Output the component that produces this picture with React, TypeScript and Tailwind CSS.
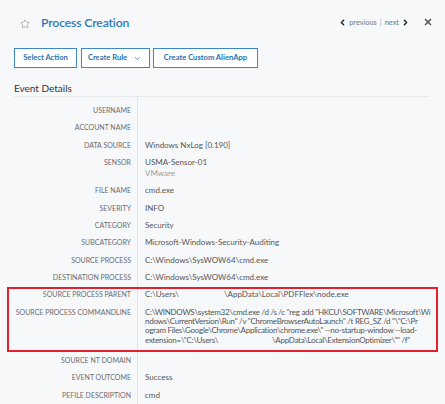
import React from 'react';
import { ChevronDown, ChevronLeft, ChevronRight, Star, X } from 'lucide-react';

type Row = { label: string; value?: React.ReactNode };

const topRows: Row[] = [
  { label: 'USERNAME' },
  { label: 'ACCOUNT NAME' },
  { label: 'DATA SOURCE', value: 'Windows NxLog [0.190]' },
  {
    label: 'SENSOR',
    value: (
      <>
        <div>USMA-Sensor-01</div>
        <div className="text-[#9a9a9a]">VMware</div>
      </>
    ),
  },
  { label: 'FILE NAME', value: 'cmd.exe' },
  { label: 'SEVERITY', value: 'INFO' },
  { label: 'CATEGORY', value: 'Security' },
  { label: 'SUBCATEGORY', value: 'Microsoft-Windows-Security-Auditing' },
  { label: 'SOURCE PROCESS', value: 'C:\\Windows\\SysWOW64\\cmd.exe' },
  { label: 'DESTINATION PROCESS', value: 'C:\\Windows\\SysWOW64\\cmd.exe' },
];

const bottomRows: Row[] = [
  { label: 'SOURCE NT DOMAIN' },
  { label: 'EVENT OUTCOME', value: 'Success' },
  { label: 'PEFILE DESCRIPTION', value: 'cmd' },
];

function DetailRow({ label, value, className = 'py-[3px] leading-[11.3px]' }: Row & { className?: string }) {
  return (
    <div className="flex">
      <div className={`w-[124px] shrink-0 border-r border-[#e3e5e8] pr-[6px] text-right text-[7px] uppercase text-[#6d6d6d] ${className}`}>
        {label}
      </div>
      <div className={`min-w-0 flex-1 pl-[7px] text-[8px] text-[#555] ${className}`}>{value}</div>
    </div>
  );
}

function Btn({ children, w }: { children: React.ReactNode; w: string }) {
  return (
    <button
      className={`${w} flex h-[20px] items-center justify-center gap-[6px] border-[1.5px] border-[#3d85c6] bg-white text-[7.6px] font-bold text-[#2c6fae]`}
    >
      {children}
    </button>
  );
}

export default function App() {
  return (
    <div className="h-[404px] w-[445px] overflow-hidden bg-[#f7f8fa] font-['Lato',sans-serif]">
      {/* header */}
      <div className="flex items-center pl-[20px] pr-[12px] pt-[14px]">
        <Star size={10} strokeWidth={1.4} className="mt-[3px] text-[#8a8a8a]" />
        <h1 className="ml-[11px] text-[12.2px] font-semibold leading-[17px] tracking-[-0.15px] text-[#2c78bd]">
          Process Creation
        </h1>
        <div className="ml-auto flex items-center text-[7.4px] text-[#6b7a88]">
          <ChevronLeft size={9} strokeWidth={4} className="text-[#222]" />
          <span className="ml-[2px]">previous</span>
          <span className="mx-[3px] text-[#aaa]">|</span>
          <span>next</span>
          <ChevronRight size={9} strokeWidth={4} className="ml-[2px] text-[#222]" />
          <X size={10} strokeWidth={4} className="ml-[13px] text-[#555]" />
        </div>
      </div>

      {/* actions */}
      <div className="mt-[17px] flex gap-[3.5px] px-[14px]">
        <Btn w="w-[63px]">Select Action</Btn>
        <Btn w="w-[69px]">
          Create Rule
          <ChevronDown size={9} strokeWidth={2} />
        </Btn>
        <Btn w="w-[105px]">Create Custom AlienApp</Btn>
      </div>

      {/* details */}
      <div className="pl-[14px] pr-[15px]">
        <div className="mt-[14px] border-b border-[#e6e8eb] pb-[2px] text-[10px] leading-[12px] text-[#333]">
          Event Details
        </div>
        <div className="h-[5px] w-[124px] border-r border-[#e3e5e8]" />
        {topRows.map((r) => (
          <DetailRow key={r.label} {...r} />
        ))}
        <div className="relative">
          <div className="pointer-events-none absolute -left-[7px] -right-[8px] top-[1px] bottom-0 border-2 border-[#e3202b]" />
          <DetailRow
            label="SOURCE PROCESS PARENT"
            value={
              <span className="whitespace-pre">
                C:\Users\<span className="inline-block w-[45px]" />\AppData\Local\PDFFlex\node.exe
              </span>
            }
          />
          <div className="flex">
            <div className="w-[124px] shrink-0 border-r border-[#e3e5e8] pr-[6px] pt-[4px] pb-[7px] text-right text-[7px] uppercase leading-[9.4px] text-[#6d6d6d]">
              SOURCE PROCESS COMMANDLINE
            </div>
            <div className="min-w-0 flex-1 whitespace-pre pl-[7px] pt-[4px] pb-[7px] text-[8px] leading-[9.4px] tracking-[-0.28px] text-[#555]">
              <div>C:\WINDOWS\system32\cmd.exe /d /s /c "reg add "HKCU\SOFTWARE\Microsoft\Wi</div>
              <div>ndows\CurrentVersion\Run" /v "ChromeBrowserAutoLaunch" /t REG_SZ /d "\"C:\Pr</div>
              <div>ogram Files\Google\Chrome\Application\chrome.exe\" --no-startup-window --load-</div>
              <div>
                extension=\"C:\Users\<span className="inline-block w-[54px]" />\AppData\Local\ExtensionOptimizer\"" /f"
              </div>
            </div>
          </div>
        </div>
        {bottomRows.map((r) => (
          <DetailRow key={r.label} {...r} />
        ))}
      </div>
    </div>
  );
}
